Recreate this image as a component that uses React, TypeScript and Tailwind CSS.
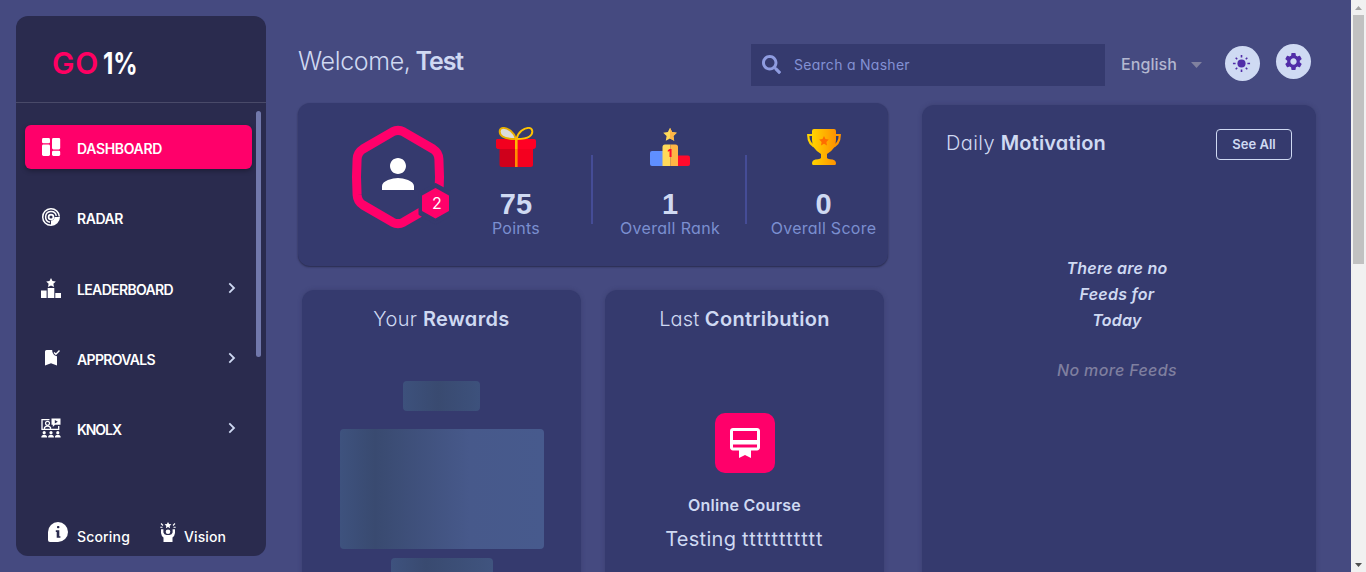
import type { ReactNode } from "react";
import { FaSearch } from "react-icons/fa";
import { MdPerson, MdSettings } from "react-icons/md";

function DashboardIcon() {
  return (
    <svg width="20" height="20" viewBox="0 0 20 20" fill="white">
      <rect x="1" y="1" width="8" height="5.3" rx="1.4" />
      <rect x="1" y="7.6" width="8" height="11.4" rx="1.4" />
      <rect x="11" y="1" width="8.2" height="11.4" rx="1.4" />
      <rect x="11" y="13.7" width="8.2" height="5.3" rx="1.4" />
    </svg>
  );
}

function RadarIcon() {
  return (
    <svg width="20" height="20" viewBox="0 0 20 20" fill="none" stroke="white" strokeWidth="1.5">
      <path d="M10 18.3A8.3 8.3 0 1 1 18.3 9.5" />
      <path d="M9 15.3A5.4 5.4 0 1 1 15.3 8.8" />
      <circle cx="10" cy="10" r="2.4" strokeWidth="1.7" />
      <path d="M13.5 10H19A9 9 0 0 1 10 19V13.5A3.6 3.6 0 0 0 13.5 10Z" fill="white" stroke="none" />
    </svg>
  );
}

function LeaderboardIcon() {
  return (
    <svg width="20" height="20" viewBox="0 0 20 20" fill="white">
      <path d="M10 0l1.500 3 3.300.400-2.400 2.300.600 3.300-3-1.600L7 9l.600-3.300L5.200 3.400 8.500 3z" />
      <path d="M0 12.600h5.600V20H0zM6.700 10h6.600v10H6.700zM14.300 15H20v5h-5.700z" />
    </svg>
  );
}

function ApprovalsIcon() {
  return (
    <svg width="20" height="20" viewBox="0 0 20 20" fill="none">
      <path d="M4 3.500Q4 2 5.500 2H11.200Q11 7 16 8.300V17.600L10 15.200 4 17.600Z" fill="white" />
      <path d="M13 4.500L14.900 6.300 18.500 2.600" stroke="white" strokeWidth="1.4" />
    </svg>
  );
}

function KnolxIcon() {
  return (
    <svg width="20" height="20" viewBox="0 0 20 20" fill="white">
      <path d="M8.500 1.700H1V11.300H17.700V8" fill="none" stroke="white" strokeWidth="1.300" />
      <path d="M10.500 .5H19.500V6.800H14L11.800 9V6.800H10.500Z" />
      <path d="M13.800 2v3.400l3-1.700z" fill="#2a2b4e" />
      <circle cx="6.500" cy="5.300" r="2" fill="none" stroke="white" strokeWidth="1.200" />
      <path d="M3.500 11V9.500Q6.500 6.500 9.500 9.500V11" fill="none" stroke="white" strokeWidth="1.300" />
      <circle cx="3.200" cy="14.700" r="1.600" />
      <circle cx="10" cy="14.700" r="1.600" />
      <circle cx="16.800" cy="14.700" r="1.600" />
      <path d="M.3 19.500Q.3 16.800 3.200 16.800T6.100 19.500ZM7.100 19.500Q7.100 16.800 10 16.800T12.900 19.500ZM13.900 19.500Q13.900 16.800 16.800 16.800T19.700 19.500Z" />
    </svg>
  );
}

function ChevronIcon() {
  return (
    <svg width="8" height="12" viewBox="0 0 8 12" fill="none" stroke="#cfd9f2" strokeWidth="1.800">
      <path d="M1.300 1.300L6 6 1.300 10.700" />
    </svg>
  );
}

function ScoringIcon() {
  return (
    <svg width="20" height="20" viewBox="0 0 20 20">
      <path d="M0 10A10 10 0 1 1 10 20H2Q0 20 0 18Z" fill="white" />
      <rect x="9" y="4" width="2.400" height="2.300" rx=".8" fill="#2a2b4e" />
      <path d="M7.800 8.300H11.300V14.200H12.400V15.700H8.700V10H7.800Z" fill="#2a2b4e" />
    </svg>
  );
}

function VisionIcon() {
  return (
    <svg width="16" height="20" viewBox="0 0 16 20" fill="white">
      <path d="M8 0l1.100 2 2.300.300-1.700 1.600.400 2.300L8 5.100 5.900 6.200l.400-2.300L4.600 2.300 6.900 2z" />
      <circle cx="8" cy="9.700" r="2.300" />
      <path d="M1 7.300H3.400V10.500Q4 12.800 6.500 13H9.500Q12 12.800 12.600 10.500V7.300H15V11Q14.500 14.500 12.500 15.500V20H3.500V15.500Q1.500 14.500 1 11Z" />
      <path d="M1 1.500L3 3.500M15 1.500L13 3.500M.3 5.300H2.500M13.500 5.300H15.700" stroke="white" strokeWidth="1.100" />
    </svg>
  );
}

function SunIcon() {
  return (
    <svg width="19" height="19" viewBox="0 0 20 20" fill="#512da8" stroke="#512da8" strokeWidth="1.700" className="mr-0.5 mb-px">
      <circle cx="10" cy="10" r="4.300" stroke="none" />
      <path d="M10 1v2.800M10 16.200V19M1 10h2.800M16.200 10H19M3.900 3.900l1.600 1.600M14.500 14.500l1.600 1.600M3.900 16.100l1.600-1.600M14.500 5.500l1.600-1.600" />
    </svg>
  );
}

function GiftIcon() {
  return (
    <svg width="40" height="40" viewBox="0 0 40 40" fill="none">
      <path d="M3.500 20H20V40H6Q3.500 40 3.500 37.500Z" fill="#cf001b" />
      <path d="M20 20H37V37.500Q37 40 34.500 40H20Z" fill="#f4001f" />
      <path d="M2 12H38Q40 12 40 14V19Q40 22 37 22H3Q0 22 0 19V14Q0 12 2 12Z" fill="#ff0024" />
      <path d="M2 12H20V22H3Q0 22 0 19V14Q0 12 2 12Z" fill="#f2001f" />
      <path d="M20 12C18 5 12 .8 7 .9C2.500 1.500 2.800 7 6.500 9.500C10 12 16 12 20 12Z" fill="#dcdcdc" stroke="#e6ae00" strokeWidth="1.900" />
      <path d="M20.500 12C22 5 28 .8 33 .9C37.500 1.500 37.200 7 33.500 9.500C30 12 24 12 20.500 12Z" stroke="#ffc400" strokeWidth="1.900" />
      <path d="M19 10H21.600V22H19Z" fill="#ffb800" />
      <path d="M19 22H21.600V40H19Z" fill="#ff8c00" />
    </svg>
  );
}

function PodiumIcon() {
  return (
    <svg width="40" height="40" viewBox="0 0 40 40">
      <path d="M2 24H13V39H2Q0 39 0 37V26Q0 24 2 24Z" fill="#5f8fff" />
      <path d="M28 28.500H38Q40 28.500 40 30.500V37Q40 39 38 39H28Z" fill="#ff0a2c" />
      <path d="M12.500 39V20Q12.500 17.500 15 17.500H20.300V39Z" fill="#ffd95a" />
      <path d="M20.300 39V17.500H25.500Q28 17.500 28 20V39Z" fill="#ffb545" />
      <path d="M20 .8L22.100 5 26.800 5.700 23.400 9 24.200 13.800 20 11.600 15.800 13.800 16.600 9 13.200 5.700 17.900 5Z" fill="#ffd95a" />
      <path d="M20 .8L22.100 5 26.800 5.700 23.400 9 24.200 13.800 20 11.600Z" fill="#ffb545" />
      <text x="19.800" y="30" textAnchor="middle" fontSize="10" fontWeight="900" fontFamily="Inter, sans-serif" fill="#ff0a2c">1</text>
    </svg>
  );
}

function TrophyIcon() {
  return (
    <svg width="40" height="40" viewBox="0 0 40 40">
      <defs>
        <linearGradient id="gold" x1="0" x2="1" y1="0" y2="0">
          <stop offset="0" stopColor="#ffd400" />
          <stop offset="1" stopColor="#ff9100" />
        </linearGradient>
      </defs>
      <path d="M9 8H4.200Q4.200 18 13 20.500M31 8H35.800Q35.800 18 27 20.500" fill="none" stroke="url(#gold)" strokeWidth="2.200" />
      <path d="M10 2H30Q32 2 32 4V13Q32 22 23 27V31Q23.500 32 26 32.200Q31.800 32.500 32 36Q32 38 31 38H9Q8 38 8 36Q8.200 32.500 14 32.200Q16.500 32 17 31V27Q8 22 8 13V4Q8 2 10 2Z" fill="url(#gold)" />
      <path d="M20 9l1.500 3.100 3.300.500-2.400 2.400.600 3.400-3-1.600-3 1.600.600-3.400-2.400-2.400 3.300-.500z" fill="#ff6d00" />
    </svg>
  );
}

function CourseIcon() {
  return (
    <svg width="36" height="36" viewBox="0 0 24 24" fill="white">
      <path d="M20 2H4c-1.110 0-2 .890-2 2v11c0 1.110.890 2 2 2h4v5l4-2 4 2v-5h4c1.110 0 2-.890 2-2V4c0-1.110-.890-2-2-2zm0 13H4v-2h16v2zm0-5H4V4h16v6z" />
    </svg>
  );
}

function LevelBadge() {
  return (
    <svg width="100" height="104" viewBox="0 0 100 104" className="shrink-0">
      <path d="M41.500 6.800Q47 4 52.500 6.800L82 24Q87.500 27.500 87.900 34L88.500 52 87.900 70Q87.500 76.500 82 80L52.500 97.200Q47 100 41.500 97.200L12 80Q6.500 76.500 6.100 70L5.500 52 6.100 34Q6.500 27.500 12 24Z" fill="none" stroke="#ff006a" strokeWidth="9" strokeLinejoin="round" />
      <path d="M84.500 59.500L100 68V89L84.500 98 69 89V68Z" fill="#353a6e" stroke="#353a6e" strokeWidth="3" strokeLinejoin="round" />
      <path d="M84.500 64L97 71V85.500L84.500 92.500 72 85.500V71Z" fill="#ff006a" stroke="#ff006a" strokeWidth="2" strokeLinejoin="round" />
      <text x="86" y="84" textAnchor="middle" fontSize="16" fontFamily="Inter, sans-serif" fill="white">2</text>
    </svg>
  );
}

function NavItem({ icon, label, active, expandable }: { icon: ReactNode; label: ReactNode; active?: boolean; expandable?: boolean }) {
  return (
    <a className={`flex h-11 w-[227px] items-center rounded-md pl-4 pr-4 ${active ? "bg-[#ff006a] shadow-[0_2px_5px_rgba(0,0,0,0.3)]" : ""}`}>
      {icon}
      <span className="mt-1 ml-4 flex-1 text-sm leading-5 font-semibold text-white">{label}</span>
      {expandable && <ChevronIcon />}
    </a>
  );
}

function Stat({ icon, value, children, className }: { icon: ReactNode; value: string; children: ReactNode; className: string }) {
  return (
    <div className={`flex flex-col items-center pt-6 ${className}`}>
      {icon}
      <strong className="mt-[21px] font-['Liberation_Sans',sans-serif] text-[29px] leading-8 font-bold text-[#cfd9f2]">{value}</strong>
      <span className="text-base leading-4 whitespace-nowrap text-[#7b8fd0]">{children}</span>
    </div>
  );
}

function Divider() {
  return <div className="mt-[52px] h-[69px] w-0.5 bg-[#454c96]" />;
}

export default function App() {
  return (
    <div className="flex h-[572px] w-full overflow-hidden bg-[#454a80] font-[Inter,'Open_Sans',sans-serif] [font-feature-settings:'cv11']">
      <aside className="mt-4 ml-4 flex h-[540px] w-[250px] shrink-0 flex-col rounded-xl bg-[#2a2b4e]">
        <div className="flex h-[87px] items-start border-b border-[#494a69] pt-[29px] pl-[36px] text-[30px] leading-9">
          <span className="font-semibold tracking-[0.8px] text-[#ff0062]">GO</span>
          <span className="ml-1 origin-left scale-x-[0.8] font-bold text-white">1%</span>
        </div>
        <div className="flex flex-1 justify-between pr-[5px] pl-[9px]">
          <nav className="flex flex-col gap-[26.3px] pt-[22px]">
            <NavItem active icon={<DashboardIcon />} label={<span className="tracking-[-0.34px]">DASHBOARD</span>} />
            <NavItem icon={<RadarIcon />} label={<span className="tracking-[-0.44px]">RADAR</span>} />
            <NavItem expandable icon={<LeaderboardIcon />} label={<span className="tracking-[-0.65px]">LEADERBOARD</span>} />
            <NavItem expandable icon={<ApprovalsIcon />} label={<span className="tracking-[-0.66px]">APPROVALS</span>} />
            <NavItem expandable icon={<KnolxIcon />} label={<span className="tracking-[-1.05px]">KNOLX</span>} />
          </nav>
          <div className="mt-2 h-[246px] w-[5px] rounded-full bg-[#7178ab]" />
        </div>
        <div className="flex h-[35px] items-start pt-px pl-8 text-sm leading-5 font-medium text-white">
          <ScoringIcon />
          <span className="mt-[5px] ml-[9px] w-[83px] tracking-[0.17px]">Scoring</span>
          <VisionIcon />
          <span className="mt-[5px] ml-2 tracking-[0.1px]">Vision</span>
        </div>
      </aside>

      <main className="ml-8 flex w-[1053px] shrink-0 flex-col">
        <header className="flex h-[103px] shrink-0 items-start text-[#cfd9f2]">
          <h1 className="mt-[45px] w-[453px] text-[25px] leading-8 font-light">
            <span className="tracking-[-0.35px]">Welcome,</span>
            <span className="ml-[5px] font-semibold tracking-[-1.1px]">Test</span>
          </h1>
          <div className="mt-11 flex h-[42px] w-[354px] items-center bg-[#353a6e] pl-[11px]">
            <FaSearch className="mb-0.5 size-[19px] text-[#8f9ce0]" />
            <span className="ml-[13px] text-sm tracking-[0.28px] text-[#8391d4]">Search a Nasher</span>
          </div>
          <div className="mt-[52px] ml-4 flex w-[104px] items-center text-base leading-6 font-medium text-[#b3b7d0]">
            <span className="tracking-[0.07px]">English</span>
            <svg width="11" height="6" viewBox="0 0 11 6" className="mt-0.5 ml-[14px]"><path d="M0 0h11L5.500 6z" fill="#80819f" /></svg>
          </div>
          <button className="mt-[46px] flex size-[35px] items-center justify-center rounded-full bg-[#cfdaf3]"><SunIcon /></button>
          <button className="mt-11 ml-4 flex size-[35px] items-center justify-center rounded-full bg-[#cfdaf3]"><MdSettings className="mr-px mb-px size-[21px] text-[#512da8]" /></button>
        </header>

        <div className="flex">
          <div className="w-[590px]">
            <section className="flex h-[163px] rounded-xl bg-[#353a6e] shadow-[0_1px_2px_rgba(20,20,40,0.6)]">
              <div className="relative w-[143px] pt-[22px] pl-[53px]">
                <LevelBadge />
                <MdPerson className="absolute top-[47px] left-[76px] size-12 text-white" />
              </div>
              <Stat className="w-[150px]" icon={<GiftIcon />} value="75"><span className="tracking-[0.24px]">Points</span></Stat>
              <Divider />
              <Stat className="w-[152px] pl-0.5" icon={<PodiumIcon />} value="1"><span className="tracking-[0.34px]">Overall Rank</span></Stat>
              <Divider />
              <Stat className="w-[141px] pl-3" icon={<TrophyIcon />} value="0"><span className="tracking-[0.26px]">Overall Score</span></Stat>
            </section>

            <div className="mt-6 ml-1 flex gap-6 text-[#cfd9f2]">
              <section className="flex h-[330px] w-[279px] flex-col items-center rounded-t-xl bg-[#353a6e] pt-[15px] shadow-[0_0_4px_rgba(40,42,80,0.35)]">
                <h2 className="text-xl leading-7 font-light"><span className="tracking-[0.35px]">Your</span> <span className="font-semibold tracking-[0.35px]">Rewards</span></h2>
                <div className="mt-12 h-[30px] w-[77px] shrink-0 rounded bg-[linear-gradient(90deg,#3d517c_0px,#394a70_35px,#3d517c_77px)]" />
                <div className="mt-[18px] h-[120px] w-[204px] shrink-0 rounded bg-[linear-gradient(90deg,#3e527e_0px,#394a70_35px,#47598b_130px,#475a8d_204px)]" />
                <div className="mt-[9px] h-[30px] w-[102px] shrink-0 rounded bg-[linear-gradient(90deg,#3e527e_0px,#394a70_35px,#40547f_102px)]" />
              </section>
              <section className="flex h-[330px] w-[279px] flex-col items-center rounded-t-xl bg-[#353a6e] pt-[15px] shadow-[0_0_4px_rgba(40,42,80,0.35)]">
                <h2 className="text-xl leading-7 font-light"><span className="tracking-[0.11px]">Last</span> <span className="font-semibold tracking-[0.33px]">Contribution</span></h2>
                <div className="mt-20 flex size-[60px] shrink-0 items-center justify-center rounded-[10px] bg-[#ff006a]"><CourseIcon /></div>
                <h3 className="mt-5 text-base leading-6 font-semibold tracking-[0.26px]">Online Course</h3>
                <p className="mt-2 text-xl leading-7"><span className="tracking-[0.3px]">Testing</span> <span className="tracking-[1.35px]">ttttttttttt</span></p>
              </section>
            </div>
          </div>

          <section className="mt-0.5 ml-[34px] h-[480px] w-[394px] rounded-t-xl bg-[#353a6e] text-[#cfd9f2] shadow-[0_0_4px_rgba(40,42,80,0.35)]">
            <div className="flex items-start justify-between px-6 pt-6">
              <h2 className="text-xl leading-7 font-light"><span className="tracking-[0.42px]">Daily</span> <span className="font-semibold tracking-[0.18px]">Motivation</span></h2>
              <button className="h-[31px] w-[76px] rounded border border-[#cfd9f2] text-[13px] font-semibold">See All</button>
            </div>
            <div className="mt-[95px] mr-1 text-center text-base leading-[26px] font-semibold tracking-[0.26px] italic">
              <p>There are no</p>
              <p>Feeds for</p>
              <p>Today</p>
              <p className="mt-6 font-medium tracking-[0.36px] text-[#7f7f9f]">No more Feeds</p>
            </div>
          </section>
        </div>
      </main>

      <div className="flex h-full w-[15px] shrink-0 flex-col items-center bg-[#f1f1f1]">
        <svg width="15" height="15" viewBox="0 0 15 15"><path d="M4 10h7L7.500 6z" fill="#a3a3a3" /></svg>
        <div className="h-[249px] w-[11px] bg-[#c1c1c1]" />
        <svg width="15" height="15" viewBox="0 0 15 15" className="mt-auto"><path d="M4 6h7L7.500 10z" fill="#505050" /></svg>
      </div>
    </div>
  );
}
